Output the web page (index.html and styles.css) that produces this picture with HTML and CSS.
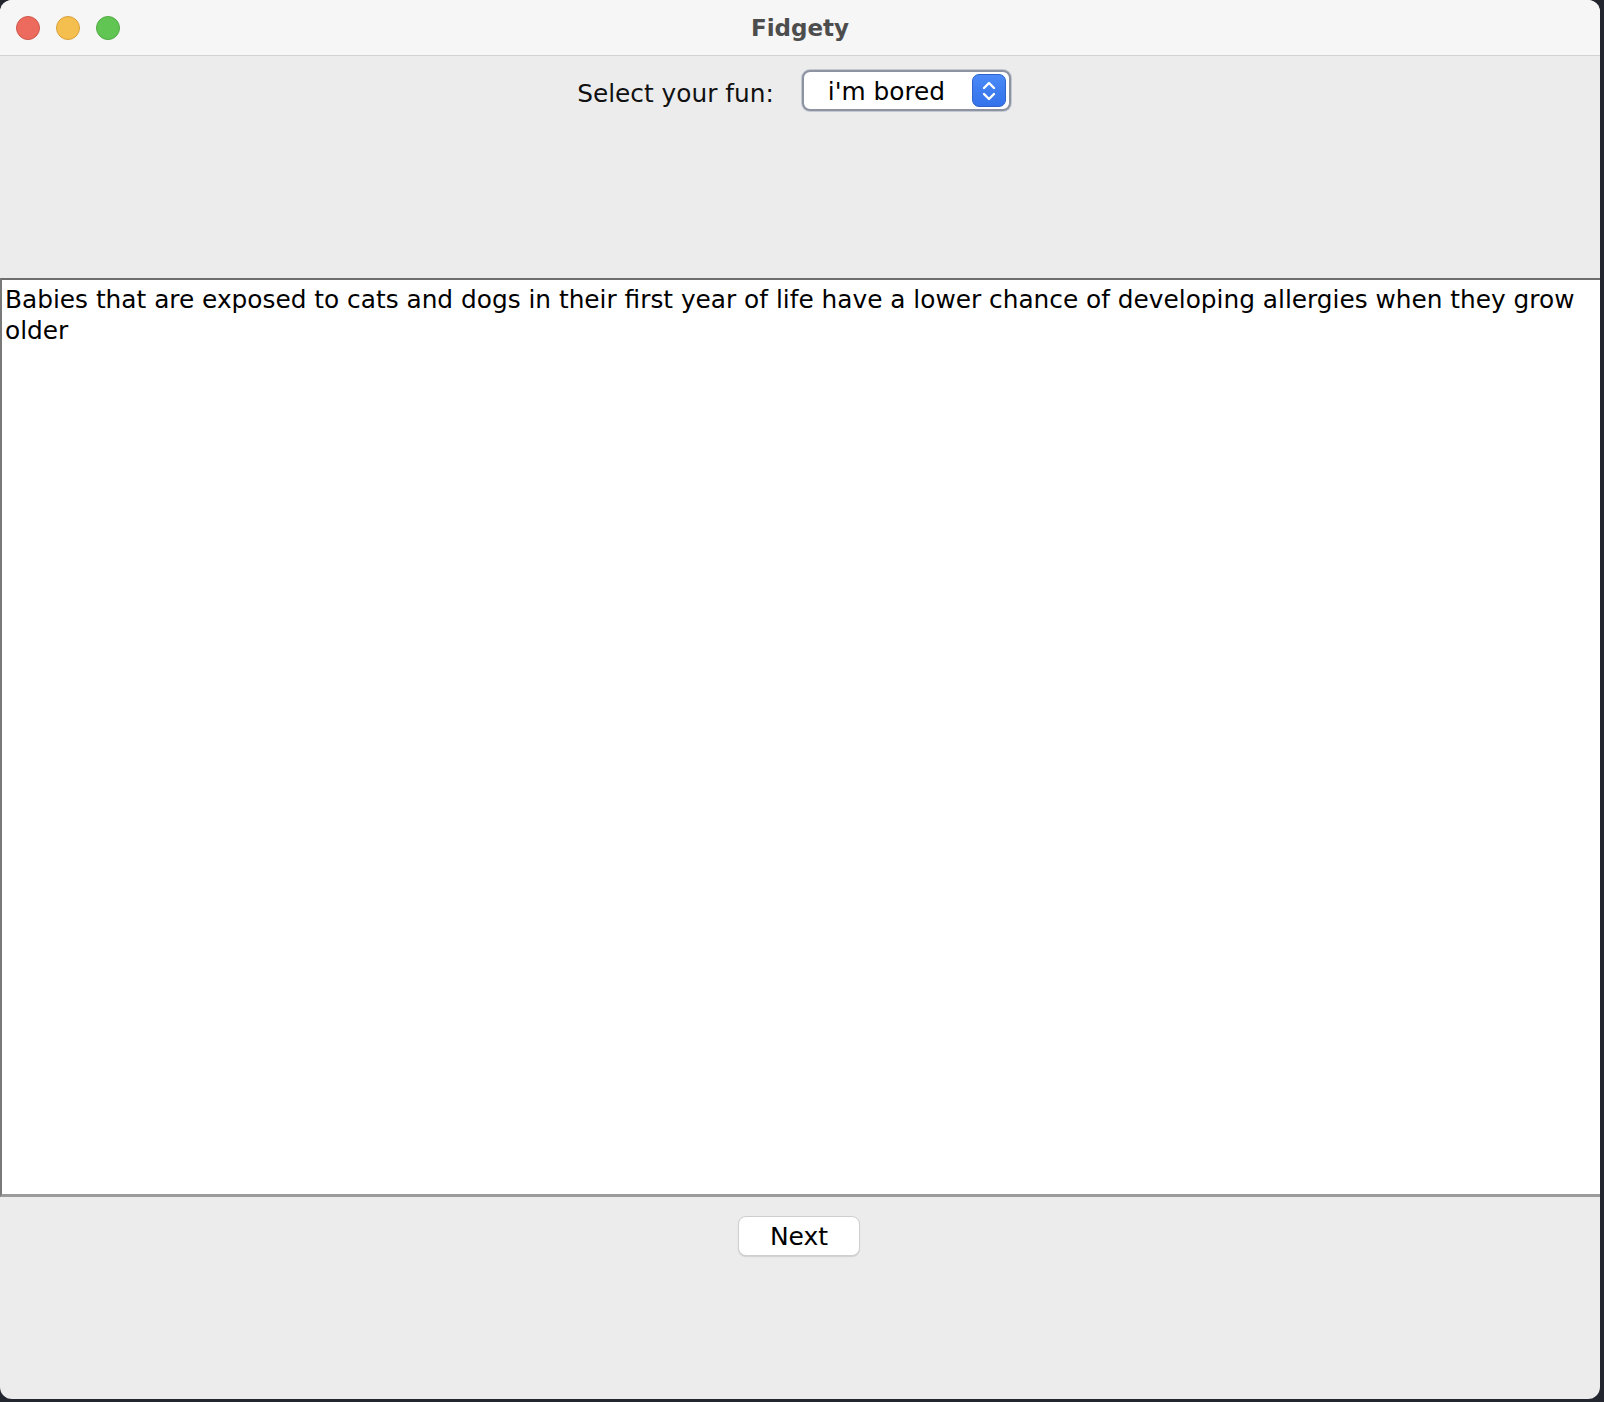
FILE: index.html
```html
<!DOCTYPE html>
<html lang="en">
<head>
<meta charset="utf-8">
<title>Fidgety</title>
<link rel="stylesheet" href="styles.css">
</head>
<body>
<div class="window">
  <div class="titlebar">
    <div class="lights">
      <span class="light red"></span>
      <span class="light yellow"></span>
      <span class="light green"></span>
    </div>
    <div class="title">Fidgety</div>
  </div>
  <div class="top-panel">
    <div class="select-row">
      <span class="label">Select your fun:</span>
      <div class="combo">
        <span class="combo-text">i'm bored</span>
        <span class="stepper">
          <svg width="20" height="28" viewBox="0 0 20 28">
            <path d="M5 11 L10 6 L15 11" fill="none" stroke="#fff" stroke-width="2.4" stroke-linecap="round" stroke-linejoin="round"/>
            <path d="M5 17 L10 22 L15 17" fill="none" stroke="#fff" stroke-width="2.4" stroke-linecap="round" stroke-linejoin="round"/>
          </svg>
        </span>
      </div>
    </div>
  </div>
  <div class="textarea">Babies that are exposed to cats and dogs in their first year of life have a lower chance of developing allergies when they grow older</div>
  <div class="bottom-panel">
    <button class="btn">Next</button>
  </div>
</div>
</body>
</html>
```

FILE: styles.css
```css
html, body {
  margin: 0;
  padding: 0;
}
body {
  background: #23252f;
  width: 1604px;
  height: 1402px;
  overflow: hidden;
  font-family: "DejaVu Sans", "Liberation Sans", sans-serif;
}
.window {
  width: 1600px;
  height: 1399px;
  border-radius: 12px;
  overflow: hidden;
  background: #ececec;
  display: flex;
  flex-direction: column;
}
.titlebar {
  height: 55px;
  flex: 0 0 55px;
  background: #f5f6f5;
  border-bottom: 1px solid #d2d2d2;
  display: flex;
  align-items: center;
  position: relative;
}
.lights {
  display: flex;
  gap: 16px;
  padding-left: 16px;
  margin-top: 1px;
}
.light {
  width: 22px;
  height: 22px;
  border-radius: 50%;
  display: block;
}
.red { background: #ec6a5e; border: 1px solid #d0574b; }
.yellow { background: #f5bf4f; border: 1px solid #d9a23c; }
.green { background: #61c554; border: 1px solid #4fab43; }
.title {
  position: absolute;
  left: 0;
  right: 0;
  top: 0;
  bottom: 0;
  display: flex;
  align-items: center;
  justify-content: center;
  font-weight: bold;
  font-size: 23px;
  color: #4d4d4d;
}
.top-panel {
  height: 222px;
  flex: 0 0 222px;
  background: #ececec;
}
.select-row {
  display: flex;
  justify-content: center;
  align-items: center;
  gap: 27px;
  padding-top: 13px;
  padding-right: 11px;
}
.label {
  font-size: 24.8px;
  color: #111;
  margin-top: 5px;
}
.combo {
  box-sizing: border-box;
  width: 209px;
  height: 41px;
  background: #fff;
  border: 2px solid #8d93a0;
  box-shadow: 0 0 0 1px #c3c8d2;
  border-radius: 8px;
  display: flex;
  align-items: center;
  justify-content: space-between;
  padding: 0 3px 0 24px;
  margin: 1px;
}
.combo-text {
  font-size: 24.8px;
  color: #000;
  margin-top: 1px;
}
.stepper {
  box-sizing: border-box;
  width: 34px;
  height: 33px;
  border-radius: 7px;
  background: linear-gradient(#4b8af7, #3372ea);
  border: 1px solid #2f63c9;
  display: flex;
  align-items: center;
  justify-content: center;
}
.textarea {
  flex: 0 0 auto;
  height: 910px;
  background: #fff;
  border: 2px solid #9b9b9b;
  border-top-color: #6e6e6e;
  border-left-color: #7a7a7a;
  border-bottom-width: 3px;
  padding: 4px 3px 0 3px;
  font-size: 24.8px;
  line-height: 31px;
  color: #000;
  box-sizing: content-box;
  width: 1592px;
}
.bottom-panel {
  flex: 1 1 auto;
  display: flex;
  justify-content: center;
  align-items: flex-start;
  padding-top: 19px;
  padding-right: 2px;
}
.btn {
  width: 122px;
  height: 40px;
  background: #fff;
  border: 1px solid #cfcfcf;
  border-radius: 8px;
  box-shadow: 0 1px 1px rgba(0,0,0,0.12);
  font-family: "DejaVu Sans", "Liberation Sans", sans-serif;
  font-size: 25px;
  color: #000;
  padding: 0;
}
```
